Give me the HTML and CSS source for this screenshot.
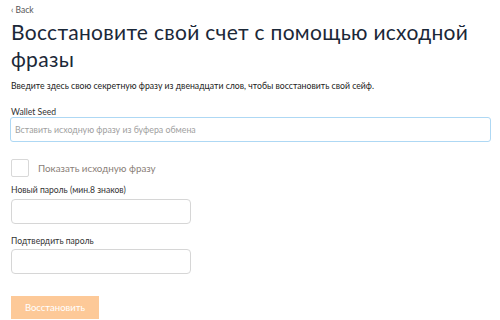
FILE: index.html
```
<!DOCTYPE html>
<html>
<head>
<meta charset="utf-8">
<link rel="stylesheet" href="styles.css">
</head>
<body>
<div class="page">
  <a class="back">‹ Back</a>
  <h1 class="title">Восстановите свой счет с помощью исходной фразы</h1>
  <p class="desc">Введите здесь свою секретную фразу из двенадцати слов, чтобы восстановить свой сейф.</p>
  <label class="label label-seed">Wallet Seed</label>
  <input class="seed" type="text" placeholder="Вставить исходную фразу из буфера обмена">
  <div class="check-row">
    <span class="box"></span>
    <span class="check-label">Показать исходную фразу</span>
  </div>
  <label class="label label-1">Новый пароль (мин.8 знаков)</label>
  <input class="pw" type="password">
  <label class="label label-2">Подтвердить пароль</label>
  <input class="pw pw-2" type="password">
  <button class="btn">Восстановить</button>
</div>
</body>
</html>
```
FILE: styles.css
```
html, body { margin: 0; padding: 0; background: #fff; }
body { font-family: Lato, sans-serif; color: #1d2a3a; }
.page { display: flex; flex-direction: column; align-items: flex-start; padding: 4px 10px 0 11px; }
.back { font-size: 8.5px; color: #555; line-height: 12px; }
.title { font-weight: 400; font-size: 21px; line-height: 27px; margin: 1.5px 0 0; color: #1b2838; letter-spacing: 0.3px; }
.desc { font-size: 8.7px; margin: 8.5px 0 0; color: #222; line-height: 12px; }
.label { font-size: 8.6px; color: #333; line-height: 10px; }
.label-seed { margin-top: 15px; }
.seed { box-sizing: border-box; width: 481px; height: 25px; margin: 0 0 0 -1px; border: 1.5px solid #aed8f4; border-radius: 3px; padding: 0 4px; font-family: inherit; font-size: 8.8px; outline: none; }
.seed::placeholder { color: #a0a0a0; }
.check-row { display: flex; align-items: center; gap: 9px; margin-top: 17px; }
.box { box-sizing: border-box; width: 18px; height: 18px; border: 1px solid #d8d8d8; border-radius: 2px; }
.check-label { font-size: 9.8px; color: #8a8078; }
.label-1 { margin-top: 8px; }
.pw { box-sizing: border-box; width: 180px; height: 25px; border: 1px solid #d6d6d6; border-radius: 4px; margin-top: 4px; outline: none; }
.label-2 { margin-top: 12px; }
.pw-2 { margin-top: 3px; }
.btn { margin-top: 22px; width: 88px; height: 23px; background: #fdc998; border: none; color: #fff; font-family: inherit; font-size: 9.5px; padding: 0; }
```
